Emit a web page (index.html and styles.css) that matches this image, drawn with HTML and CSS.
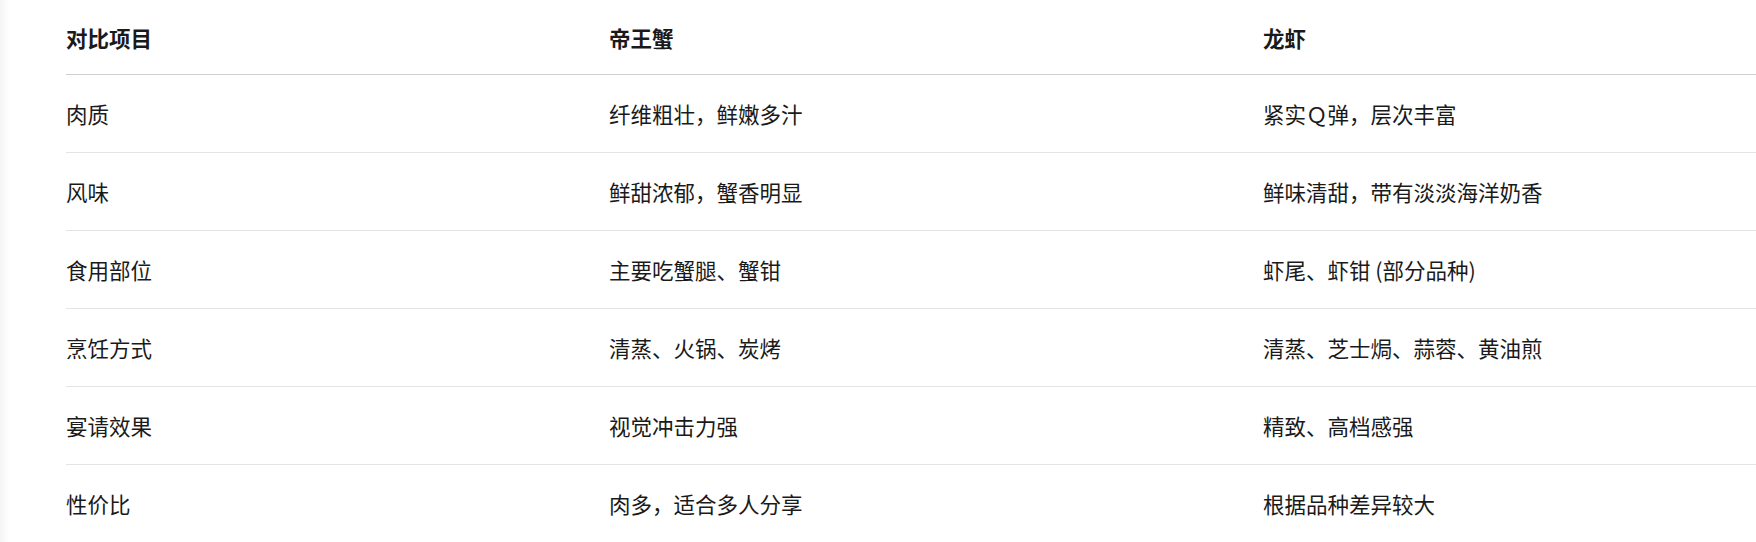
FILE: index.html
```html
<!DOCTYPE html>
<html lang="zh-CN">
<head>
<meta charset="utf-8">
<title>帝王蟹 vs 龙虾</title>
<link rel="stylesheet" href="styles.css">
</head>
<body>
<div class="page">
  <div class="edge"></div>
  <div class="wrap">
    <div class="cmp" role="table">
      <div class="row head" role="row"><div class="cell" role="columnheader">对比项目</div><div class="cell" role="columnheader">帝王蟹</div><div class="cell" role="columnheader">龙虾</div></div>
      <div class="row" role="row"><div class="cell">肉质</div><div class="cell">纤维粗壮，鲜嫩多汁</div><div class="cell">紧实Ｑ弹，层次丰富</div></div>
      <div class="row" role="row"><div class="cell">风味</div><div class="cell">鲜甜浓郁，蟹香明显</div><div class="cell">鲜味清甜，带有淡淡海洋奶香</div></div>
      <div class="row" role="row"><div class="cell">食用部位</div><div class="cell">主要吃蟹腿、蟹钳</div><div class="cell">虾尾、虾钳 (部分品种)</div></div>
      <div class="row" role="row"><div class="cell">烹饪方式</div><div class="cell">清蒸、火锅、炭烤</div><div class="cell">清蒸、芝士焗、蒜蓉、黄油煎</div></div>
      <div class="row" role="row"><div class="cell">宴请效果</div><div class="cell">视觉冲击力强</div><div class="cell">精致、高档感强</div></div>
      <div class="row" role="row"><div class="cell">性价比</div><div class="cell">肉多，适合多人分享</div><div class="cell">根据品种差异较大</div></div>
    </div>
  </div>
</div>
</body>
</html>
```
FILE: styles.css
```css
html, body {
  margin: 0;
  padding: 0;
  background: #ffffff;
  overflow: hidden;
}
.page {
  display: flex;
  width: 1756px;
  height: 542px;
  font-family: "Noto Sans CJK SC", "Noto Sans", sans-serif;
  color: #1a1a1a;
}
.edge {
  width: 10px;
  flex: none;
  background: linear-gradient(to right, #f4f4f4, #fbfbfb 60%, #ffffff);
}
.wrap {
  flex: 1;
  padding-left: 56px;
}
.cmp {
  display: flex;
  flex-direction: column;
}
.row {
  display: grid;
  grid-template-columns: 543px 654px 1fr;
  align-items: center;
  height: 77px;
  border-bottom: 1px solid #e4e4e4;
  font-size: 21.5px;
  line-height: 26px;
  white-space: nowrap;
}
.row.head {
  height: 74px;
  border-bottom: 1px solid #d0d0d0;
  font-weight: 700;
}
.cell {
  padding-top: 1px;
}
```
